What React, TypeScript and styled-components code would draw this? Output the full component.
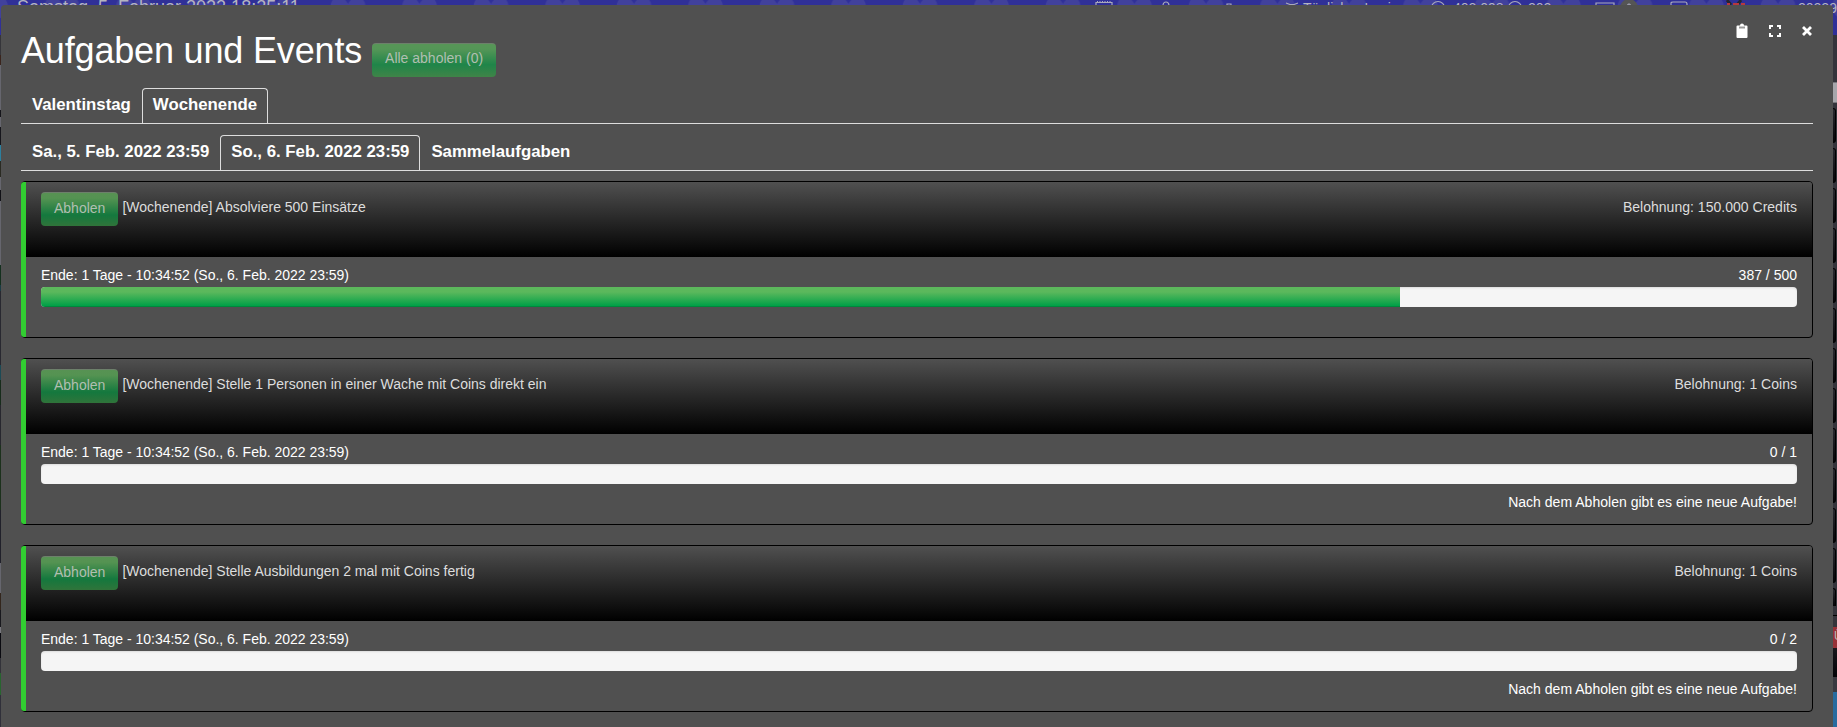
import React from 'react';
import styled, { createGlobalStyle } from 'styled-components';

const Global = createGlobalStyle`
  * { box-sizing: border-box; }
  html, body { margin: 0; height: 727px; overflow: hidden; }
  body { font: 14px/20px "Liberation Sans", Arial, sans-serif; color: #fff; background: #3a3a42; }
`;

const Page = styled.div`
  position: relative;
  width: 1837px;
  height: 727px;
  overflow: hidden;
  background: #232329;
`;

const NavBar = styled.div`
  position: relative;
  height: 35px;
  color: #b4b4c0;
  background: #303098;
`;

const NavItem = styled.span<{ $x: number; $y?: number; $size?: number }>`
  position: absolute;
  left: ${(p) => p.$x}px;
  top: ${(p) => p.$y ?? -2}px;
  font-size: ${(p) => p.$size ?? 14}px;
  line-height: 20px;
  white-space: nowrap;
`;

const NavPattern = styled.svg`
  position: absolute;
  left: 0;
  top: 0;
`;

const NavDrawing = styled.svg`
  position: absolute;
  left: 1080px;
  top: 0;
`;

const LeftStrip = styled.div`
  position: absolute;
  left: 0;
  top: 35px;
  width: 1px;
  height: 692px;
  background: linear-gradient(#35353a 0 20px, #3a241c 20px 30px, #66666e 30px 75px, #15151a 75px 82px,
    #66666e 82px 92px, #16161c 92px 110px, #2c7f9e 110px 126px, #2a2a22 126px 142px, #66666e 142px 155px,
    #111116 155px 166px, #66666e 166px 230px, #14301e 230px 250px, #1b3c44 250px 256px, #282830 256px 330px,
    #1c4a55 330px 345px, #172c1b 345px 370px, #27272e 370px 410px, #1c311c 410px 475px, #20202a 475px 528px,
    #66666e 528px 558px, #33261c 558px 575px, #18181d 575px 592px, #77777d 592px 598px, #0a0a10 598px 623px,
    #33333a 623px 638px, #28652f 638px 660px, #30303a 660px);
`;

const SideColumn = styled.div`
  position: absolute;
  right: 0;
  top: 35px;
  width: 8px;
  height: 692px;
  display: flex;
  flex-direction: column;
  padding-left: 4px;
  background: #34343b;
`;

const SideInput = styled.div`
  height: 21px;
  flex: none;
  margin: 47px 0 5px;
  background: #a6a6ab;
  border: solid #77777c;
  border-width: 1px 0;
`;

const SideEntry = styled.div<{ $cut?: boolean }>`
  height: ${(p) => (p.$cut ? 18 : 35)}px;
  margin-bottom: ${(p) => (p.$cut ? 0 : 5)}px;
  width: 3px;
  flex: none;
  border: 1px solid #000;
  border-left: 0;
  border-bottom-width: ${(p) => (p.$cut ? 0 : 1)}px;
  border-radius: ${(p) => (p.$cut ? '0 3px 0 0' : '0 3px 3px 0')};
  background: linear-gradient(#29292f, #030306);
`;

const SideRule = styled.div`
  height: 1px;
  flex: none;
  margin: 9px 0 11px;
  background: #000;
`;

const SideBlock = styled.div<{ $h: number; $bg: string }>`
  height: ${(p) => p.$h}px;
  flex: none;
  padding-left: 1px;
  font-size: 12px;
  line-height: 18px;
  color: #bbb;
  overflow: hidden;
  background: ${(p) => p.$bg};
`;

const Modal = styled.main`
  position: absolute;
  left: 1px;
  top: 5px;
  width: 1832px;
  height: 722px;
  padding: 0 20px;
  border-radius: 4px 4px 0 0;
  background: #505050;
`;

const Controls = styled.div`
  position: absolute;
  right: 21px;
  top: 18px;
  display: flex;
  gap: 20px;

  svg { display: block; }
`;

const Header = styled.header`
  display: flex;
  align-items: flex-start;
  height: 83px;
  padding-top: 26px;
`;

const Title = styled.h1`
  margin: 0 10px 0 0;
  font-size: 36px;
  font-weight: 400;
  line-height: 40px;
  letter-spacing: -0.17px;
  white-space: nowrap;
`;

const Button = styled.button`
  height: 34px;
  padding: 0 12px 7px;
  border: 1px solid #57804f;
  border-color: #6d806b transparent transparent;
  border-radius: 4px;
  font: inherit;
  color: #b1bfb1;
  background: linear-gradient(#579253 0, #559352 18%, #14783e 68%, #30743a 100%) border-box;
  white-space: nowrap;
  flex: none;
`;

const CollectAll = styled(Button)`
  margin-top: 12px;
  padding-bottom: 5px;
  background: linear-gradient(#579657 0, #559657 18%, #1f8549 64%, #408448 100%) border-box;
`;

const Tabs = styled.nav<{ $gap: number }>`
  display: flex;
  height: 36px;
  margin-bottom: ${(p) => p.$gap}px;
  border-bottom: 1px solid #ddd;
`;

const Tab = styled.a<{ $active?: boolean }>`
  height: 35px;
  padding: 0 10px;
  border: 1px solid ${(p) => (p.$active ? '#ddd' : 'transparent')};
  border-bottom: 0;
  border-radius: 4px 4px 0 0;
  font-size: 16.8px;
  font-weight: 700;
  line-height: 31px;
  white-space: nowrap;
`;

const Card = styled.section`
  position: relative;
  margin-bottom: 20px;
  padding-left: 4px;
  border: 1px solid #000;
  border-radius: 4px;

  &::before {
    content: '';
    position: absolute;
    left: -1px;
    top: 0;
    bottom: 0;
    width: 5px;
    border-radius: 3px 0 0 3px;
    background: #32cd32;
  }
`;

const CardHead = styled.div`
  display: flex;
  height: 75px;
  padding: 10px 15px;
  gap: 4px;
  border-radius: 0 3px 0 0;
  color: #ddd;
  line-height: 30px;
  background: linear-gradient(#505050, #000);
`;

const Reward = styled.span`
  margin-left: auto;
  letter-spacing: 0.02px;
`;

const CardBody = styled.div`
  padding: 8px 15px 10px;
`;

const Status = styled.div`
  display: flex;
  justify-content: space-between;
  height: 22px;
`;

const Deadline = styled.span`
  letter-spacing: -0.015px;
`;

const Track = styled.div`
  height: 20px;
  overflow: hidden;
  border-radius: 4px;
  background: #f5f5f5;
  box-shadow: inset 0 1px 2px rgba(0, 0, 0, 0.1);
`;

const Fill = styled.div`
  height: 100%;
  background: linear-gradient(#5cb85c 0, #5cb85c 25%, #00a047 95%);
  box-shadow: inset 0 -1px 0 rgba(0, 0, 0, 0.15);
`;

const Note = styled.div<{ $empty: boolean }>`
  height: ${(p) => (p.$empty ? 20 : 30)}px;
  padding-top: 8px;
  text-align: right;
  letter-spacing: 0.02px;
`;

const tasks = [
  { name: 'Absolviere 500 Einsätze', reward: '150.000 Credits', done: 387, total: 500, repeat: false },
  { name: 'Stelle 1 Personen in einer Wache mit Coins direkt ein', reward: '1 Coins', done: 0, total: 1, repeat: true },
  { name: 'Stelle Ausbildungen 2 mal mit Coins fertig', reward: '1 Coins', done: 0, total: 2, repeat: true },
];

export default function App() {
  return (
    <Page>
      <Global />
      <NavBar>
        <NavPattern width="1837" height="35">
          <defs>
            <pattern id="lobes" x="27" width="71.5" height="35" patternUnits="userSpaceOnUse">
              <g fill="#41419c">
                <ellipse cx="27" cy="8" rx="9" ry="11" transform="rotate(-25 27 8)" />
                <ellipse cx="43" cy="8" rx="9" ry="11" transform="rotate(25 43 8)" />
              </g>
            </pattern>
          </defs>
          <rect width="1837" height="35" fill="url(#lobes)" />
        </NavPattern>
        <NavItem $x={17} $y={-3} $size={18}>Samstag, 5. Februar 2022 18:25:11</NavItem>
        <NavItem $x={1303}>Täglicher Login</NavItem>
        <NavItem $x={1453}>402.098</NavItem>
        <NavItem $x={1528}>202</NavItem>
        <NavItem $x={1798}>20229</NavItem>
        <NavDrawing width="700" height="5" fill="none" stroke="#a9a9bb" strokeWidth="1.2">
          <path d="M16 8V2.500h16V8" />
          <path d="M17 1.500h14" strokeDasharray="1 1.500" />
          <path d="M83 6q0-4 3-4t3 4M147 6V4h4v2M206 3l4 1.500h4l4-1.500" />
          <circle cx="358" cy="8" r="6.5" />
          <circle cx="435" cy="8" r="6.5" />
          <path d="M516 8V3h18v5M591 8V3q0-1 2-1h12q2 0 2 2v4" />
          <circle cx="549" cy="8" r="9" fill="#555" stroke="none" />
          <path d="M547.500 5q1.500-2 3 0" />
          <path d="M647 0l4 5M657 5l4-5" stroke="#252530" strokeWidth="3" />
          <path d="M647 4h3m3 0h6m2 0h4" stroke="#b8383d" strokeWidth="2" />
        </NavDrawing>
      </NavBar>
      <LeftStrip />
      <SideColumn>
        <SideInput />
        {Array.from({ length: 12 }, (_, i) => <SideEntry key={i} />)}
        <SideEntry $cut />
        <SideRule />
        <SideBlock $h={21} $bg="#973137">Ü</SideBlock>
        <SideBlock $h={29} $bg="linear-gradient(#17171c, #030307)" />
        <SideBlock $h={15} $bg="#393940" />
        <SideBlock $h={35} $bg="#286b9f" />
      </SideColumn>

      <Modal>
        <Controls>
          <svg width="12" height="16" viewBox="0 0 12 16">
            <path fill="#fff" d="M1.500 2.500H4a2 2 0 0 1 4 0h2.500q1 0 1 1v10.500q0 1-1 1h-9q-1 0-1-1V3.500q0-1 1-1z" />
            <path fill="#999" d="M3 3.500h6v2H3z" />
          </svg>
          <svg width="14" height="16" viewBox="0 0 14 16" fill="none" stroke="#fff" strokeWidth="2">
            <path d="M2 6V3h3M9 3h3v3M12 10v3H9M5 13H2v-3" />
          </svg>
          <svg width="10" height="16" viewBox="0 0 10 16" stroke="#fff" strokeWidth="2.800">
            <path d="M1 4l8 8M9 4l-8 8" />
          </svg>
        </Controls>
        <Header>
          <Title>Aufgaben und Events</Title>
          <CollectAll>Alle abholen (0)</CollectAll>
        </Header>
        <Tabs $gap={11}>
          <Tab>Valentinstag</Tab>
          <Tab $active>Wochenende</Tab>
        </Tabs>
        <Tabs $gap={10}>
          <Tab>Sa., 5. Feb. 2022 23:59</Tab>
          <Tab $active>So., 6. Feb. 2022 23:59</Tab>
          <Tab>Sammelaufgaben</Tab>
        </Tabs>
        {tasks.map((t) => (
          <Card key={t.name}>
            <CardHead>
              <Button>Abholen</Button>
              <span>[Wochenende] {t.name}</span>
              <Reward>Belohnung: {t.reward}</Reward>
            </CardHead>
            <CardBody>
              <Status>
                <Deadline>Ende: 1 Tage - 10:34:52 (So., 6. Feb. 2022 23:59)</Deadline>
                <span>{t.done} / {t.total}</span>
              </Status>
              <Track>
                <Fill style={{ width: `${(t.done / t.total) * 100}%` }} />
              </Track>
              <Note $empty={!t.repeat}>{t.repeat && 'Nach dem Abholen gibt es eine neue Aufgabe!'}</Note>
            </CardBody>
          </Card>
        ))}
      </Modal>
    </Page>
  );
}
